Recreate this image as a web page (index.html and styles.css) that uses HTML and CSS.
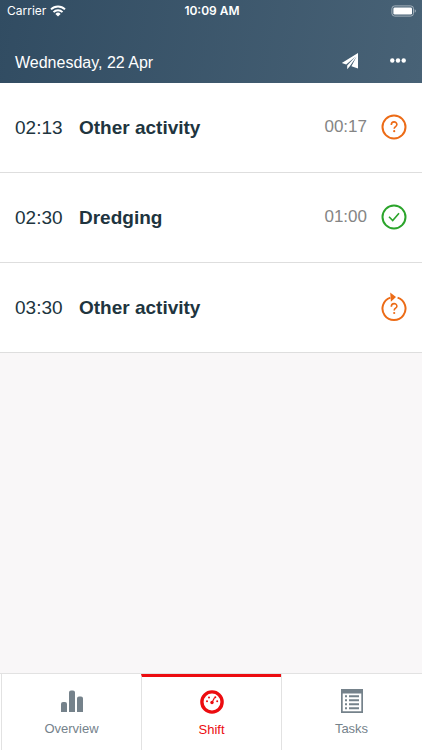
FILE: index.html
```html
<!DOCTYPE html>
<html lang="en">
<head>
<meta charset="utf-8">
<meta name="viewport" content="width=device-width, initial-scale=1">
<title>Shift</title>
<link rel="stylesheet" href="styles.css">
</head>
<body>
<header class="header">
  <div class="status">
    <div class="carrier">
      <span>Carrier</span>
      <svg width="16" height="12" viewBox="0 0 16 12" aria-hidden="true">
        <g fill="none" stroke="#fff" stroke-width="2">
          <path d="M1 4.400a10 10 0 0 1 14 0"/>
          <path d="M3.500 7.100a6.400 6.400 0 0 1 9 0"/>
        </g>
        <path d="M5.400 8.900a3.700 3.700 0 0 1 5.200 0L8 11.600z" fill="#fff"/>
      </svg>
    </div>
    <time class="clock">10:09 AM</time>
    <svg class="battery" width="26" height="12" viewBox="0 0 26 12" aria-hidden="true">
      <rect x=".9" y=".9" width="21.600" height="10.200" rx="2.800" fill="none" stroke="#a3b0bb"/>
      <rect x="2.400" y="2.400" width="18.600" height="7.200" rx="1.400" fill="#fff"/>
      <path d="M23.700 4.200c1.600.6 1.600 3 0 3.600z" fill="#a3b0bb"/>
    </svg>
  </div>
  <div class="bar">
    <h1 class="date">Wednesday, 22 Apr</h1>
    <button class="icon-button" type="button" aria-label="Send">
      <svg width="18" height="18" viewBox="0 0 18 18">
        <path d="M17 1 .8 10.900l4.400 1.700L14.600 4.400 6.200 13.400v3.800l2.600-3L15.600 4.500 10.400 14.300 17 16.600z" fill="#fff"/>
      </svg>
    </button>
    <button class="icon-button" type="button" aria-label="More">
      <svg width="16" height="18" viewBox="0 0 16 18">
        <g fill="#fff"><circle cx="2.300" cy="8.500" r="2.200"/><circle cx="8" cy="8.500" r="2.200"/><circle cx="13.700" cy="8.500" r="2.200"/></g>
      </svg>
    </button>
  </div>
</header>

<main class="content">
  <ul class="entries">
    <li class="entry">
      <time class="start">02:13</time>
      <span class="name">Other activity</span>
      <time class="duration">00:17</time>
      <svg class="state unknown" viewBox="0 0 26 30" role="img" aria-label="Unconfirmed">
        <circle cx="13" cy="15" r="11.500"/>
        <path class="mark" d="M10.300 13c0-4.200 5.600-3.900 5.600-.5 0 2-2.700 2.100-2.700 4.200"/>
        <circle class="dot" cx="13.200" cy="19.200" r="1.100"/>
      </svg>
    </li>
    <li class="entry">
      <time class="start">02:30</time>
      <span class="name">Dredging</span>
      <time class="duration">01:00</time>
      <svg class="state done" viewBox="0 0 26 30" role="img" aria-label="Confirmed">
        <circle cx="13" cy="15" r="11.500"/>
        <path class="mark" d="M8 14.800l3.700 3.700 6.300-7.300"/>
      </svg>
    </li>
    <li class="entry">
      <time class="start">03:30</time>
      <span class="name">Other activity</span>
      <svg class="state unknown" viewBox="0 0 26 30" role="img" aria-label="In progress">
        <path d="M16.600 5.600A11.500 11.500 0 1 1 9.400 5.600"/>
        <path class="dot" d="M9.200.6l5.800 4.400-5.100 4.800z"/>
        <path class="mark" d="M10.300 14.700c0-4.200 5.600-3.900 5.600-.5 0 2-2.700 2.100-2.700 4.200"/>
        <circle class="dot" cx="13.200" cy="21" r="1.100"/>
      </svg>
    </li>
  </ul>
</main>

<nav class="tabs">
  <a class="tab" href="#overview">
    <svg width="24" height="24" viewBox="0 0 24 24" aria-hidden="true">
      <path d="M1 23v-8a2 2 0 0 1 2-2h2a2 2 0 0 1 2 2v8zM9 23V3.500a2 2 0 0 1 2-2h2a2 2 0 0 1 2 2V23zM17 23V9.500a2 2 0 0 1 2-2h2a2 2 0 0 1 2 2V23z" fill="currentColor"/>
    </svg>
    <span>Overview</span>
  </a>
  <a class="tab active" href="#shift" aria-current="page">
    <svg width="24" height="24" viewBox="0 0 24 24" aria-hidden="true">
      <circle cx="12" cy="12" r="10.100" fill="none" stroke="currentColor" stroke-width="3.400"/>
      <g fill="currentColor">
        <circle cx="7" cy="11.200" r="1"/><circle cx="9" cy="7.500" r="1"/><circle cx="15.300" cy="7.200" r="1"/><circle cx="17.200" cy="11.200" r="1"/>
        <circle cx="12" cy="12.500" r="1.700"/>
      </g>
      <path d="M12 12.500l2.600-5" stroke="currentColor" stroke-width="1.200"/>
    </svg>
    <span>Shift</span>
  </a>
  <a class="tab" href="#tasks">
    <svg width="24" height="24" viewBox="0 0 24 24" aria-hidden="true">
      <path fill="currentColor" fill-rule="evenodd" d="M1 0h22v24H1zM2.700 4.500v17.800h18.600V4.500z"/>
      <path fill="currentColor" d="M5 6.200h2v2H5zM5 10.200h2v2H5zM5 14.200h2v2H5zM5 18.200h2v2H5zM9 6.200h10v2H9zM9 10.200h10v2H9zM9 14.200h10v2H9zM9 18.200h10v2H9z"/>
    </svg>
    <span>Tasks</span>
  </a>
</nav>
</body>
</html>
```
FILE: styles.css
```css
* {
  box-sizing: border-box;
}

body {
  margin: 0;
  min-height: 100vh;
  display: flex;
  flex-direction: column;
  background: #f9f7f8;
  color: #20343e;
  font-family: "Liberation Sans", Arial, sans-serif;
}

svg {
  display: block;
  flex: none;
}

.header {
  background: linear-gradient(100deg, #314c62, #486276);
  color: #fff;
}

.status {
  display: grid;
  grid-template-columns: 1fr auto 1fr;
  align-items: center;
  height: 22px;
  padding: 0 5px 0 7px;
  font: 12px/22px Inter, sans-serif;
}

.carrier {
  display: flex;
  align-items: center;
  gap: 4px;
}

.clock {
  font-weight: 600;
}

.battery {
  justify-self: end;
}

.bar {
  display: flex;
  align-items: center;
  gap: 16px;
  height: 61px;
  padding: 20px 8px 0 15px;
}

.date {
  flex: 1;
  margin: 0;
  font-size: 16px;
  line-height: 20px;
  font-weight: 400;
}

.icon-button {
  display: grid;
  place-items: center;
  width: 32px;
  height: 32px;
  margin: 0;
  padding: 0 0 4px;
  border: 0;
  background: none;
}

.content {
  flex: 1;
}

.entries {
  margin: 0;
  padding: 0;
  list-style: none;
}

.entry {
  display: flex;
  align-items: center;
  height: 90px;
  padding: 0 15px;
  border-bottom: 1px solid #dedede;
  background: #fff;
  font-size: 19px;
  line-height: 24px;
}

.start {
  width: 64px;
}

.name {
  flex: 1;
  font-weight: 700;
}

.duration {
  margin-right: 14px;
  padding-bottom: 2px;
  color: #858585;
  font-size: 17px;
}

.state {
  width: 26px;
  height: 30px;
  margin-bottom: 2px;
  fill: none;
  stroke: currentColor;
  stroke-width: 2;
}

.mark {
  stroke-width: 1.6;
}

.unknown {
  color: #ec6b16;
}

.done {
  color: #2ba42b;
}

.dot {
  fill: currentColor;
  stroke: none;
}

.tabs {
  display: flex;
  height: 77px;
  padding: 0 1px;
  border-top: 1px solid #e2e2e2;
  background: #fff;
}

.tab {
  flex: 1;
  display: flex;
  flex-direction: column;
  align-items: center;
  gap: 8px;
  padding-top: 15px;
  border-left: 1px solid #e2e2e2;
  color: #75828b;
  font-size: 13px;
  line-height: 16px;
  text-decoration: none;
}

.active {
  padding-top: 13px;
  border-top: 3px solid #ec0c10;
  color: #ec0c10;
}
```
